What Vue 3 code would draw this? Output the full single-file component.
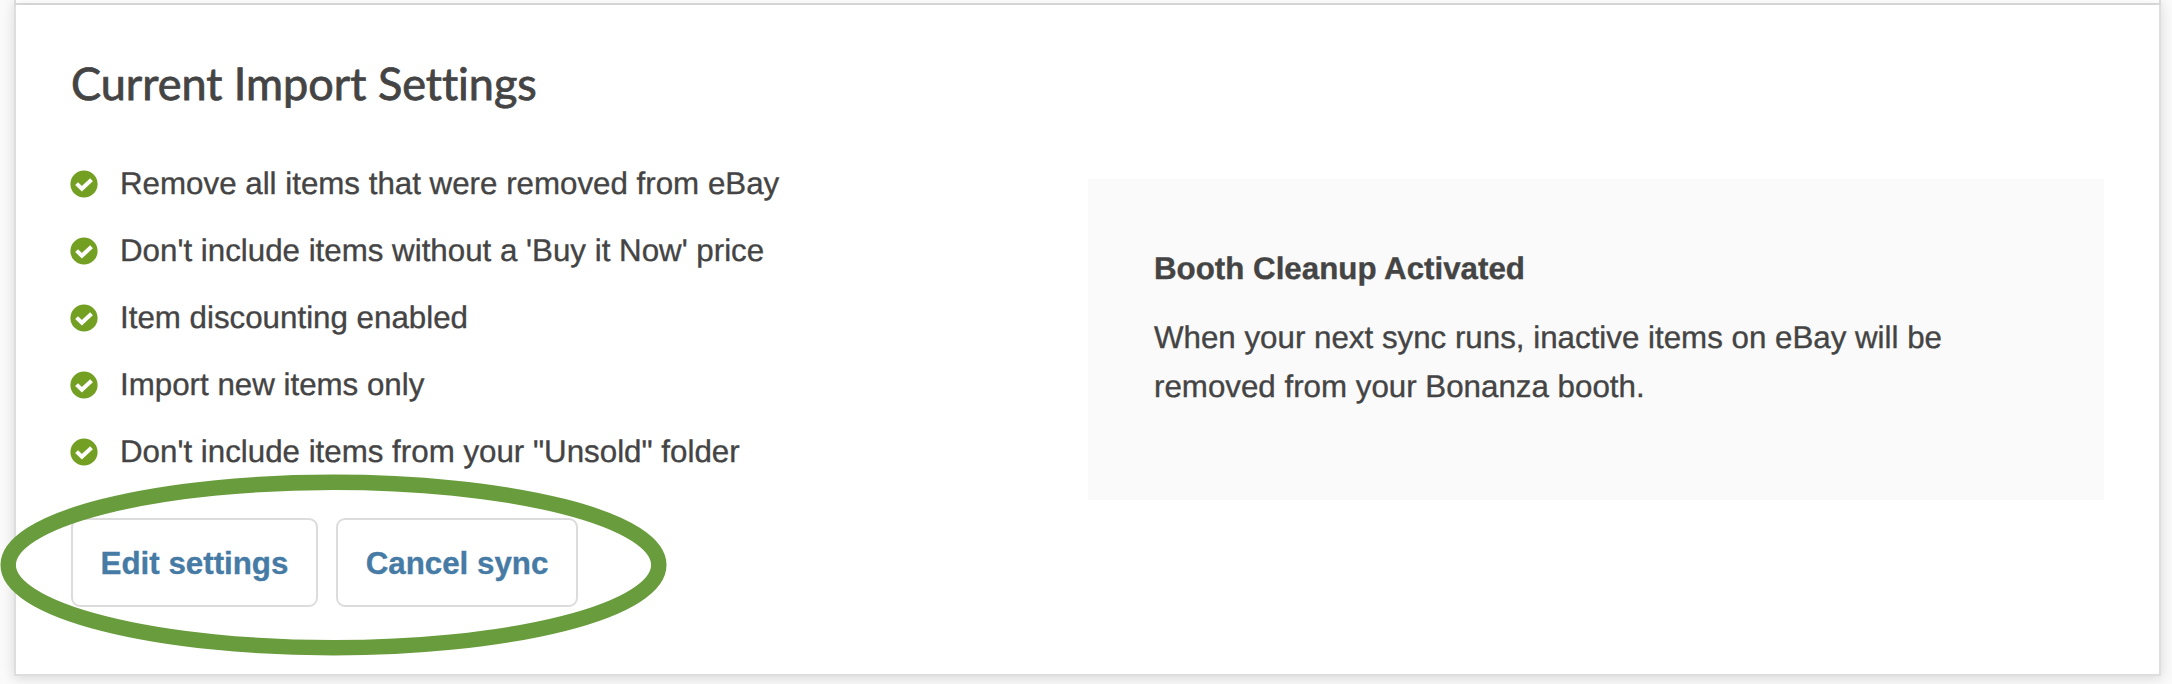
<script setup>
const settings = [
  'Remove all items that were removed from eBay',
  "Don't include items without a 'Buy it Now' price",
  'Item discounting enabled',
  'Import new items only',
  'Don\'t include items from your "Unsold" folder',
]
</script>

<template>
  <div class="page">
    <div class="card-above"></div>
    <section class="card">
      <h2>Current Import Settings</h2>
      <div class="columns">
        <div class="left">
          <ul>
            <li v-for="item in settings" :key="item">
              <svg class="check" viewBox="0 0 28 28">
                <circle cx="14" cy="14" r="13.6" fill="#73a022" />
                <path d="M6.6 13.6l5.3 5.2 9.6-9" fill="none" stroke="#fff" stroke-width="4" />
              </svg>
              <span>{{ item }}</span>
            </li>
          </ul>
          <div class="actions">
            <button type="button" class="edit">Edit settings</button>
            <button type="button" class="cancel">Cancel sync</button>
            <svg class="highlight" viewBox="0 0 668 182">
              <ellipse cx="333.5" cy="91" rx="325.3" ry="82.7" fill="none" stroke="#699c3c" stroke-width="15.4" />
            </svg>
          </div>
        </div>
        <aside>
          <h3>Booth Cleanup Activated</h3>
          <p>When your next sync runs, inactive items on eBay will be removed from your Bonanza booth.</p>
        </aside>
      </div>
    </section>
  </div>
</template>

<style>
body {
  margin: 0;
  background: #fafafa;
}
</style>

<style scoped>
.page {
  box-sizing: border-box;
  height: 684px;
  padding: 0 11px 0 14px;
  overflow: hidden;
  font-family: "Liberation Sans", Arial, sans-serif;
  font-size: 31.3px;
  color: #444;
  text-rendering: geometricPrecision;
  -webkit-text-stroke: 0.35px;
}
.card-above,
.card {
  box-sizing: border-box;
  background: #fff;
  border: 2px solid #dedede;
  box-shadow: 0 2px 12px rgba(0, 0, 0, 0.14);
}
.card-above {
  height: 5px;
  border-top: 0;
}
.card {
  height: 671px;
  border-top: 0;
  padding: 48px 55px 0 55px;
}
h2 {
  margin: 0;
  height: 60px;
  font: 400 45px/60px Lato, sans-serif;
  font-variant-ligatures: none;
  -webkit-text-stroke: 0.8px;
}
.columns {
  display: flex;
  justify-content: space-between;
  margin-top: 37px;
}
ul {
  list-style: none;
  margin: 0;
  padding: 0;
}
li {
  display: flex;
  align-items: center;
  height: 67px;
  white-space: nowrap;
}
.check {
  width: 28px;
  height: 28px;
  margin: 0 22px 0 -1px;
}
.actions {
  position: relative;
  display: flex;
  gap: 18px;
  margin-top: 33px;
}
button {
  box-sizing: border-box;
  height: 89px;
  padding: 2px 0 0;
  background: #fff;
  border: 2px solid #dcdcdc;
  border-radius: 9px;
  font: 700 31.3px "Liberation Sans", Arial, sans-serif;
  color: #467ba5;
}
.edit {
  width: 247px;
}
.cancel {
  width: 242px;
}
.highlight {
  position: absolute;
  left: -71px;
  top: -44px;
  width: 668px;
  height: 182px;
  pointer-events: none;
}
aside {
  box-sizing: border-box;
  width: 1016px;
  height: 321px;
  margin-top: 29px;
  padding: 65px 140px 0 66px;
  background: #fafafa;
}
h3 {
  margin: 0;
  font-size: inherit;
  line-height: 49px;
}
p {
  margin: 20px 0 0;
  line-height: 49px;
}
</style>
